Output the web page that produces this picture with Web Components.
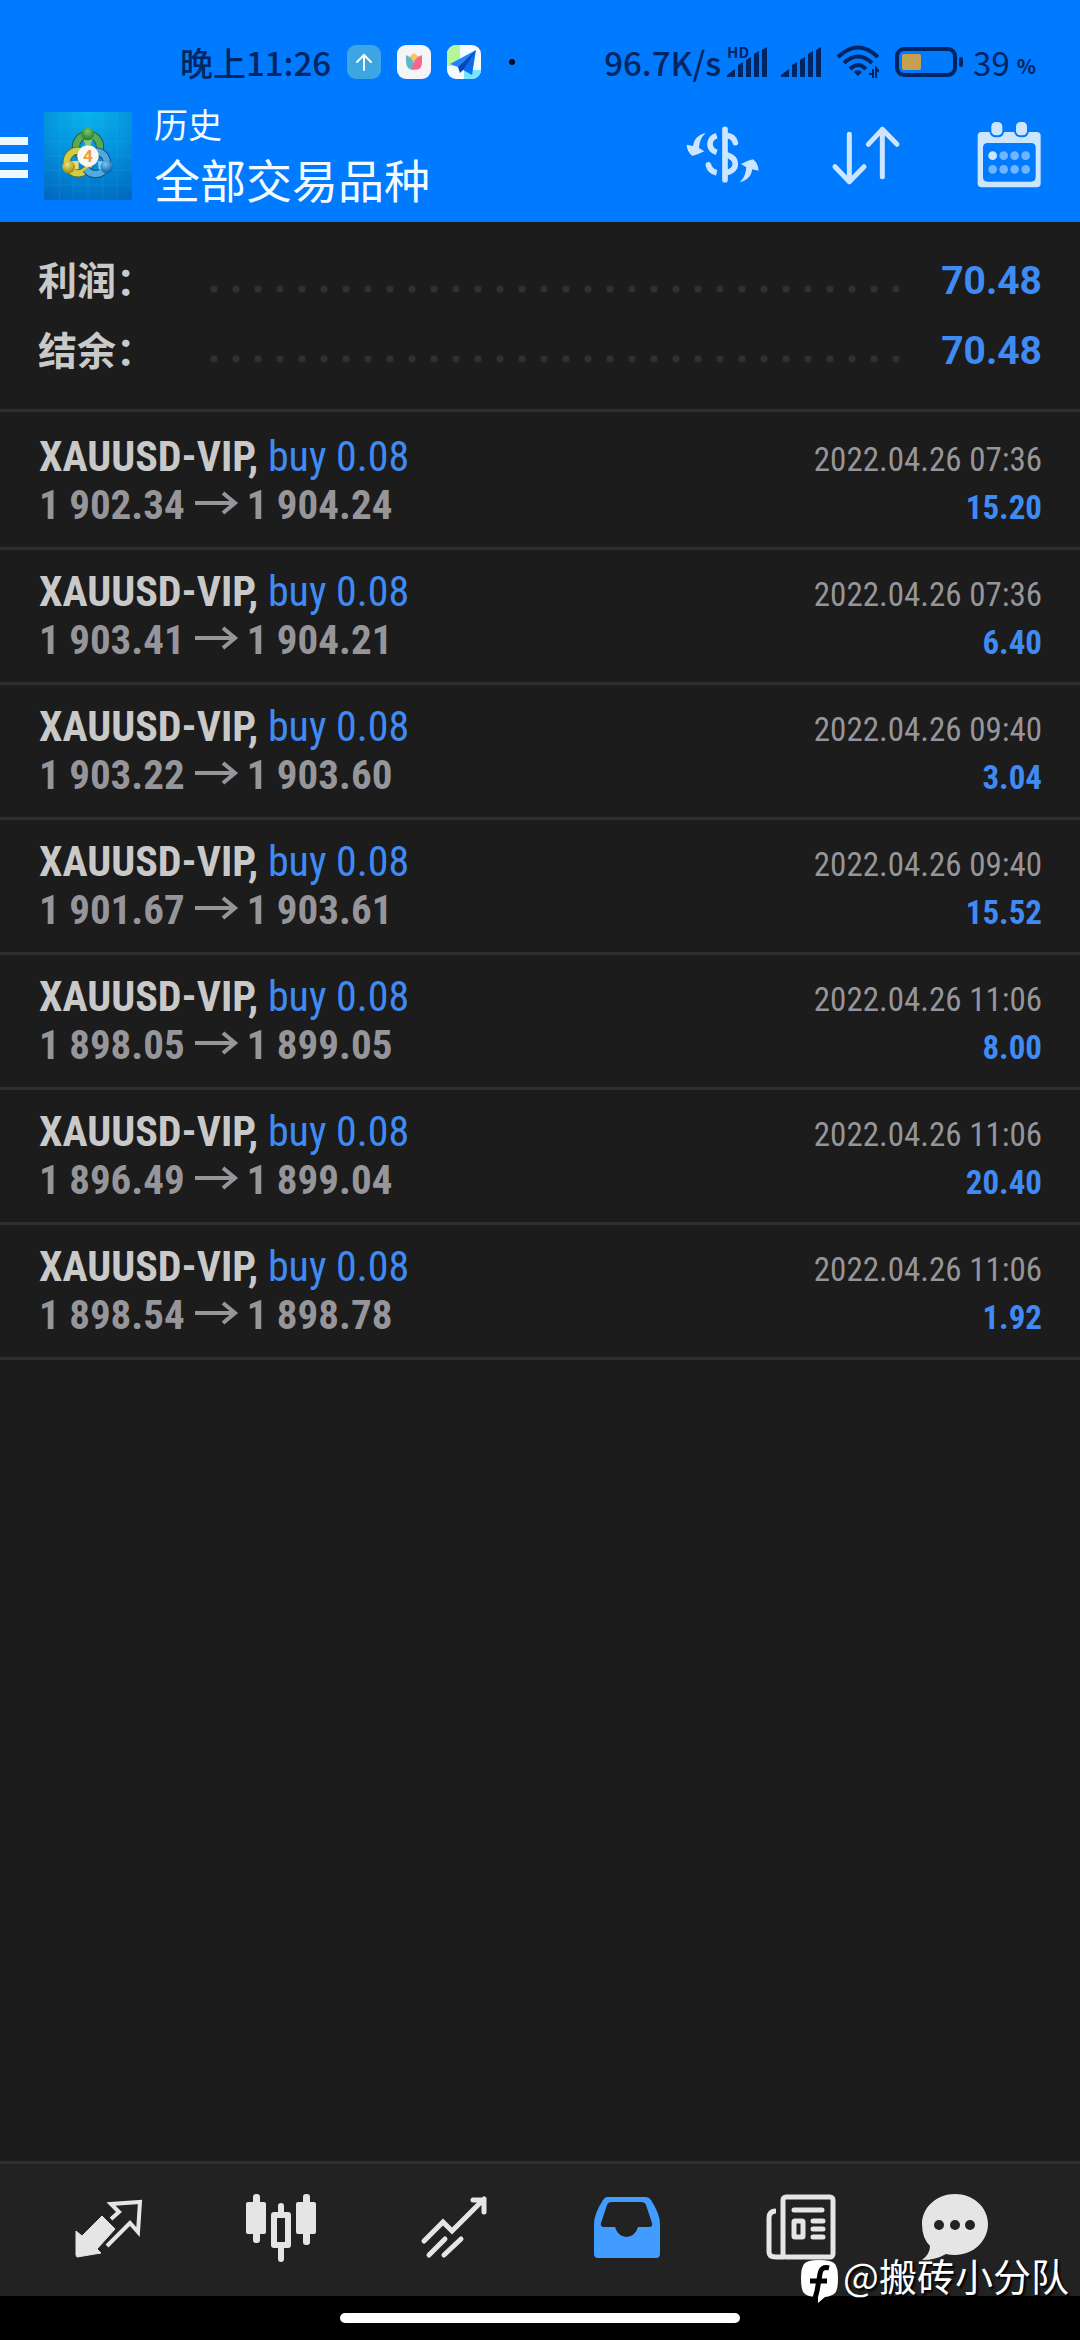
<!DOCTYPE html>
<html lang="zh-CN">
<head>
  <meta charset="utf-8">
  <meta name="viewport" content="width=device-width, initial-scale=1">
  <title>历史</title>
  <style>
    :root {
      --brand-blue: #007aff;
      --status-ink: #002560;
      --toolbar-icon: #cce6ff;
      --page: #1c1c1c;
      --tab-bar: #222222;
      --line: #2f2f30;
      --text: #c9c9c9;
      --muted: #96969a;
      --link: #3f8bf3;
    }

    body {
      margin: 0;
      background-color: var(--page);
      font-family: Roboto, "Noto Sans CJK SC", sans-serif;
    }
  </style>
</head>
<body>
  <history-app>
    <status-bar slot="header" time="晚上11:26" speed="96.7K/s" battery="39"></status-bar>
    <app-bar slot="header" heading="历史" subheading="全部交易品种"></app-bar>
    <account-summary>
      <summary-row label="利润：">70.48</summary-row>
      <summary-row label="结余：">70.48</summary-row>
    </account-summary>
    <deal-row symbol="XAUUSD-VIP," side="buy 0.08" open="1 902.34" close="1 904.24" time="2022.04.26 07:36" profit="15.20"></deal-row>
    <deal-row symbol="XAUUSD-VIP," side="buy 0.08" open="1 903.41" close="1 904.21" time="2022.04.26 07:36" profit="6.40"></deal-row>
    <deal-row symbol="XAUUSD-VIP," side="buy 0.08" open="1 903.22" close="1 903.60" time="2022.04.26 09:40" profit="3.04"></deal-row>
    <deal-row symbol="XAUUSD-VIP," side="buy 0.08" open="1 901.67" close="1 903.61" time="2022.04.26 09:40" profit="15.52"></deal-row>
    <deal-row symbol="XAUUSD-VIP," side="buy 0.08" open="1 898.05" close="1 899.05" time="2022.04.26 11:06" profit="8.00"></deal-row>
    <deal-row symbol="XAUUSD-VIP," side="buy 0.08" open="1 896.49" close="1 899.04" time="2022.04.26 11:06" profit="20.40"></deal-row>
    <deal-row symbol="XAUUSD-VIP," side="buy 0.08" open="1 898.54" close="1 898.78" time="2022.04.26 11:06" profit="1.92"></deal-row>
    <tab-bar slot="footer"></tab-bar>
    <home-indicator slot="footer"></home-indicator>
    <author-mark slot="overlay">@搬砖小分队</author-mark>
  </history-app>

  <script>
    // Clones the markup into an open shadow root and returns it
    function render(element, html) {
      const template = document.createElement("template");
      template.innerHTML = html;
      const shadowRoot = element.attachShadow({ mode: "open" });
      shadowRoot.appendChild(template.content.cloneNode(true));
      return shadowRoot;
    }

    // Copies attributes into the elements of the same class
    function fill(element, names) {
      names.forEach(name => {
        element.shadowRoot.querySelector("." + name).textContent = element.getAttribute(name);
      });
    }

    class HistoryApp extends HTMLElement {
      connectedCallback() {
        render(this, `
          <style>
            :host {
              display: flex;
              flex-direction: column;
              min-height: 100vh;
              position: relative;
              background-color: var(--page);
            }
            header { background-color: var(--brand-blue); }
            main { flex: 1; }
          </style>
          <header><slot name="header"></slot></header>
          <main><slot></slot></main>
          <footer><slot name="footer"></slot></footer>
          <slot name="overlay"></slot>
        `);
      }
    }

    class StatusBar extends HTMLElement {
      connectedCallback() {
        render(this, `
          <style>
            :host {
              display: flex;
              align-items: center;
              height: 56px;
              padding: 34px 44px 0 180px;
              color: var(--status-ink);
              font-family: "Noto Sans CJK SC", sans-serif;
              font-size: 33px;
              line-height: 56px;
              white-space: nowrap;
            }
            svg { display: block; flex: none; }
            .time { font-weight: 500; }
            .apps { display: flex; align-items: center; gap: 16px; margin-left: 16px; }
            .dot { width: 6px; height: 6px; margin-left: 28px; border-radius: 50%; background-color: #000a1a; }
            .system { display: flex; align-items: center; margin-left: auto; }
            .speed { font-weight: 500; margin-right: 6px; }
            .signal { position: relative; margin-right: 14px; }
            .hd {
              position: absolute;
              left: 0;
              top: -1px;
              font-size: 15px;
              font-weight: 700;
              line-height: 12px;
            }
            .wifi { margin: 0 16px 0 2px; }
            .battery { margin-left: 10px; }
            .percent { margin: 8px 0 0 7px; font-size: 20px; font-weight: 700; }
          </style>
          <span class="time"></span>
          <div class="apps">
            <svg width="34" height="34" viewBox="0 0 34 34">
              <rect width="34" height="34" rx="9" fill="#3da5e2"/>
              <path d="M17 25V10M10 17l7-7 7 7" fill="none" stroke="#fff" stroke-width="2" stroke-linecap="round"/>
            </svg>
            <svg width="34" height="34" viewBox="0 0 34 34">
              <rect width="34" height="34" rx="9" fill="#f5f5f7"/>
              <path d="M12 12l5-4 5 4-5 6z" fill="#f3c46c"/>
              <path d="M9 10q8 3 8 12v3q-8 0-8-9z" fill="#5fb6c6"/>
              <path d="M25 10q-9 3-10 14 10 3 10-7z" fill="#f8668e"/>
            </svg>
            <svg width="34" height="34" viewBox="0 0 34 34">
              <clipPath id="tile"><rect width="34" height="34" rx="9"/></clipPath>
              <g clip-path="url(#tile)">
                <rect width="34" height="34" fill="#f4fbff"/>
                <rect width="13" height="21" fill="#b6f69a"/>
                <rect x="17" y="25" width="17" height="9" fill="#78e4fc"/>
                <path d="M29 5L3 19l8 3z" fill="#1f83ff"/>
                <path d="M29 5L11 22l14 8z" fill="#0a6cf0"/>
                <path d="M29 5L11 22l2 6 4-4z" fill="#0447b8"/>
              </g>
            </svg>
          </div>
          <div class="dot"></div>
          <div class="system">
            <span class="speed"></span>
            <div class="signal">
              <span class="hd">HD</span>
              <svg width="40" height="30" viewBox="0 0 40 30" fill="currentColor"><path d="M0 30v-2l8-6v8zM11 18l5-3v15h-5zM19 13l5-3v20h-5zM27 7l5-3v26h-5zM35 3l5-3v30h-5z"/></svg>
            </div>
            <div class="signal">
              <svg width="40" height="30" viewBox="0 0 40 30" fill="currentColor"><path d="M0 30v-2l8-6v8zM11 18l5-3v15h-5zM19 13l5-3v20h-5zM27 7l5-3v26h-5zM35 3l5-3v30h-5z"/></svg>
            </div>
            <svg class="wifi" width="42" height="34" viewBox="0 0 42 34" fill="none" stroke="currentColor" stroke-width="4">
              <path d="M1 12Q21-7 41 12M7 18Q21 5 35 18M13 24Q21 16 29 24"/>
              <path d="M21 31l-4-4q4-4 8 0z" fill="currentColor" stroke="none"/>
              <path d="M32 29h4v-5M36 24v9M39 33v-10l3 4" stroke-width="2"/>
            </svg>
            <svg width="68" height="30" viewBox="0 0 68 30">
              <rect x="2" y="2" width="58" height="26" rx="7" fill="none" stroke="currentColor" stroke-width="4"/>
              <rect x="7" y="7" width="19" height="16" rx="2" fill="#c6a052"/>
              <rect x="64" y="10" width="4" height="10" rx="2" fill="currentColor"/>
            </svg>
            <span class="battery"></span>
            <span class="percent">%</span>
          </div>
        `);
        fill(this, ["time", "speed", "battery"]);
      }
    }

    class AppBar extends HTMLElement {
      connectedCallback() {
        render(this, `
          <style>
            :host {
              display: flex;
              align-items: center;
              height: 132px;
              color: #f2faff;
              font-family: "Noto Sans CJK SC", sans-serif;
            }
            svg { display: block; }
            button { border: 0; padding: 0; background: none; color: inherit; cursor: pointer; }
            .menu { width: 44px; }
            .titles { flex: 1; margin-left: 22px; }
            h1, p { margin: 0; font-weight: 400; white-space: nowrap; }
            h1 { font-size: 34px; line-height: 44px; }
            p { font-size: 46px; line-height: 64px; }
            .actions { display: flex; color: var(--toolbar-icon); }
            .actions button { display: grid; place-items: center; width: 143px; height: 132px; }
          </style>
          <button class="menu" aria-label="menu">
            <svg width="28" height="44" viewBox="0 0 28 44" fill="#eef8ff"><path d="M0 3h28v8H0zM0 20h28v8H0zM0 36h28v8H0z"/></svg>
          </button>
          <svg width="88" height="88" viewBox="24 24 264 264">
            <defs>
              <radialGradient id="sky" cx=".5" cy="0" r="1.1"><stop offset="0" stop-color="#08b4ea"/><stop offset=".5" stop-color="#0490dc"/><stop offset="1" stop-color="#0068c0"/></radialGradient>
              <radialGradient id="green" cx=".5" cy=".3" r=".7"><stop offset="0" stop-color="#7cc96a"/><stop offset="1" stop-color="#1c7a25"/></radialGradient>
              <radialGradient id="gold" cx=".4" cy=".3" r=".7"><stop offset="0" stop-color="#ece27a"/><stop offset="1" stop-color="#9c8c0c"/></radialGradient>
              <radialGradient id="azure" cx=".4" cy=".3" r=".7"><stop offset="0" stop-color="#7cc6f0"/><stop offset="1" stop-color="#0a62a8"/></radialGradient>
            </defs>
            <rect x="24" y="24" width="264" height="264" fill="url(#sky)"/>
            <path d="M71 24v264M112 24v264M156 24v264M200 24v264M243 24v264M24 69h264M24 112h264M24 156h264M24 198h264M24 243h264" stroke="#4db4f0" stroke-opacity=".25" stroke-width="2"/>
            <g fill="none">
              <circle cx="156" cy="128" r="36" stroke="#1d5a4a" stroke-width="25"/>
              <circle cx="156" cy="128" r="36" stroke="#58ab52" stroke-width="19"/>
              <circle cx="126" cy="174" r="34" stroke="#5a6420" stroke-width="24"/>
              <circle cx="126" cy="174" r="34" stroke="#d2cb48" stroke-width="19"/>
              <path d="M180 142a34 34 0 1 1-29 54" stroke="#0a4f86" stroke-width="25"/>
              <path d="M180 142a34 34 0 1 1-29 54" stroke="#52a9de" stroke-width="19"/>
            </g>
            <path d="M142 100h28l-6 24h-16z" fill="#8cc878"/>
            <path d="M106 172l22-2v26h-22z" fill="#e8dd70"/>
            <path d="M186 172l20 0v26l-18-2z" fill="#8ccbf0"/>
            <circle cx="155" cy="90" r="19" fill="url(#green)"/>
            <circle cx="98" cy="189" r="19" fill="url(#gold)"/>
            <circle cx="212" cy="188" r="19" fill="url(#azure)"/>
            <circle cx="156" cy="156" r="32" fill="#f8f8f6"/>
            <text x="156" y="174" text-anchor="middle" font-family="Roboto, sans-serif" font-size="52" font-weight="700" fill="#f29a3c">4</text>
          </svg>
          <div class="titles">
            <h1 class="heading"></h1>
            <p class="subheading"></p>
          </div>
          <div class="actions">
            <button aria-label="symbols">
              <svg width="90" height="70" viewBox="-7 3 270 210" fill="none" stroke="currentColor" stroke-width="17">
                <path d="M76 39C54 44 42 56 38 78L19 74Q20 95 36 108 52 104 72 94L56 84C58 66 62 52 76 39Z" fill="currentColor" stroke="none"/>
                <path d="M178 187C200 182 212 170 216 148L235 152Q234 131 218 118 202 122 182 132L198 142C196 160 192 174 178 187Z" fill="currentColor" stroke="none"/>
                <path d="M109 47Q89 54 89 72T109 97"/>
                <path d="M84 134Q88 154 109 158"/>
                <circle cx="84" cy="134" r="8" fill="currentColor" stroke="none"/>
                <path d="M134 28V179" stroke-linecap="round"/>
                <path d="M138 46Q160 48 165 68" stroke-linecap="round"/>
                <path d="M138 104Q165 112 165 132T138 158"/>
              </svg>
            </button>
            <button aria-label="sort">
              <svg width="72" height="66" viewBox="477 69 216 198" fill="none" stroke="currentColor" stroke-width="15" stroke-linecap="round" stroke-linejoin="round">
                <path d="M535 103V245M492 200l43 45 44-45M634 230V88M592 133l42-45 44 45"/>
              </svg>
            </button>
            <button aria-label="period">
              <svg width="72" height="66" viewBox="907 69 216 198" fill="currentColor" overflow="visible">
                <path fill-rule="evenodd" d="M933 96H1098q12 0 12 12V250q0 12-12 12H933q-12 0-12-12V108q0-12 12-12zM951 129q-14 0-14 14V231q0 14 14 14H1081q14 0 14-14V143q0-14-14-14z"/>
                <g stroke="#007aff" stroke-width="6"><rect x="959" y="63" width="39" height="46" rx="16"/><rect x="1033" y="63" width="39" height="46" rx="16"/></g>
                <circle cx="966" cy="167" r="13"/>
                <g opacity=".55"><circle cx="999" cy="167" r="13"/><circle cx="1032" cy="167" r="13"/><circle cx="1065" cy="167" r="13"/><circle cx="966" cy="208" r="13"/><circle cx="999" cy="208" r="13"/><circle cx="1032" cy="208" r="13"/><circle cx="1065" cy="208" r="13"/></g>
              </svg>
            </button>
          </div>
        `);
        fill(this, ["heading", "subheading"]);
      }
    }

    class AccountSummary extends HTMLElement {
      connectedCallback() {
        render(this, `
          <style>
            :host {
              display: block;
              padding: 23px 38px 24px 38px;
              border-bottom: 3px solid var(--line);
              margin-bottom: 3px;
            }
          </style>
          <slot></slot>
        `);
      }
    }

    class SummaryRow extends HTMLElement {
      connectedCallback() {
        render(this, `
          <style>
            :host {
              display: grid;
              grid-template-columns: 165px 1fr auto;
              height: 70px;
              font-size: 39px;
            }
            .label {
              color: var(--text);
              font-family: "Noto Sans CJK SC", sans-serif;
              font-weight: 700;
              line-height: 66px;
            }
            .leader {
              align-self: center;
              height: 22px;
              margin: 16px 36px 0 0;
              background: radial-gradient(circle, #303031 3px, transparent 4px) 0 0 / 22px 22px repeat-x;
            }
            .value { color: var(--link); font-weight: 700; line-height: 72px; }
          </style>
          <span class="label"></span>
          <span class="leader"></span>
          <span class="value"><slot></slot></span>
        `);
        fill(this, ["label"]);
      }
    }

    class DealRow extends HTMLElement {
      connectedCallback() {
        render(this, `
          <style>
            :host {
              display: block;
              padding: 18px 38px 18px 39px;
              border-bottom: 3px solid var(--line);
              font-family: "Roboto Condensed", Roboto, sans-serif;
              font-size: 42px;
              line-height: 48px;
              white-space: nowrap;
            }
            .line { display: flex; justify-content: space-between; align-items: baseline; height: 48px; }
            .symbol { color: var(--text); font-weight: 700; }
            .side { color: var(--link); }
            .prices { color: var(--muted); font-size: 41px; font-weight: 700; }
            svg { margin: 0 8px 0 10px; vertical-align: 4px; }
            .time { color: var(--muted); font-size: 33px; }
            .profit { color: var(--link); font-size: 33px; font-weight: 700; }
          </style>
          <div class="line">
            <span><span class="symbol"></span> <span class="side"></span></span>
            <span class="time"></span>
          </div>
          <div class="line">
            <span class="prices"><span class="open"></span><svg width="44" height="24" viewBox="0 0 44 24" fill="none" stroke="currentColor" stroke-width="4"><path d="M0 12h40M28 2l12 10-12 10"/></svg><span class="close"></span></span>
            <span class="profit"></span>
          </div>
        `);
        fill(this, ["symbol", "side", "time", "open", "close", "profit"]);
      }
    }

    class TabBar extends HTMLElement {
      connectedCallback() {
        render(this, `
          <style>
            :host {
              display: block;
              border-top: 3px solid var(--line);
              background-color: var(--tab-bar);
              color: #e5e5e5;
            }
            nav { display: grid; grid-template-columns: repeat(5, 16fr) 12fr; padding: 0 6% 0 2%; }
            button {
              display: grid;
              place-items: center;
              height: 132px;
              border: 0;
              padding: 0;
              background: none;
              color: inherit;
              cursor: pointer;
            }
            button[aria-current] { color: #429bff; }
          </style>
          <nav>
            <button aria-label="quotes">
              <svg width="80" height="80" viewBox="68 40 80 80">
                <path d="M76 81l6 5 20-20 13 13-18 20 4 4-24 4-1-2z" fill="currentColor" stroke="currentColor" stroke-linejoin="round"/>
                <path d="M111 69l8-7-8-8 29-2-2 30-8-9-23 23" fill="none" stroke="currentColor" stroke-width="4"/>
              </svg>
            </button>
            <button aria-label="charts">
              <svg width="80" height="80" viewBox="241 40 80 80" fill="currentColor">
                <rect x="253" y="44" width="7" height="49" rx="3"/><rect x="246" y="52" width="20" height="32" rx="2"/>
                <rect x="303" y="44" width="7" height="51" rx="3"/><rect x="296" y="52" width="20" height="32" rx="2"/>
                <path d="M278 62v-6q0-3 3-3t3 3v6zM278 98v11q0 3 3 3t3-3V98z"/>
                <rect x="274" y="65" width="14" height="30" fill="none" stroke="currentColor" stroke-width="6" stroke-linejoin="round"/>
              </svg>
            </button>
            <button aria-label="trade">
              <svg width="80" height="80" viewBox="414 40 80 80" fill="none" stroke="currentColor" stroke-width="5" stroke-linecap="round">
                <path d="M424 91l19-19 9 9 32-32M473 50h11v12M429 105l16-16M444 105l17-16"/>
              </svg>
            </button>
            <button aria-label="history" aria-current="page">
              <svg width="80" height="80" viewBox="587 40 80 80" fill="currentColor">
                <path fill-rule="evenodd" d="M608 47h39q3 0 5 3 9 14 9 24v30q0 4-4 4h-58q-4 0-4-4V74q0-10 9-24 2-3 4-3zM613 52q-4 0-5 3l-6 18q-1 4 3 4h11a12 14 0 0 0 23 0h11q4 0 3-4l-6-18q-1-3-5-3z"/>
              </svg>
            </button>
            <button aria-label="news">
              <svg width="80" height="80" viewBox="759 40 80 80" fill="none" stroke="currentColor" stroke-width="5">
                <rect x="783" y="47" width="50" height="60" rx="3"/>
                <path d="M776 61q-7 0-7 7v34q0 5 7 5h8"/>
                <rect x="794" y="71" width="9" height="16" rx="1"/>
                <path d="M794 60h28M813 71h10M813 79h10M813 87h10" stroke-linecap="round"/>
              </svg>
            </button>
            <button aria-label="messages">
              <svg width="80" height="80" viewBox="908 40 80 80">
                <path d="M953 44c18 0 33 13 33 30s-15 31-33 31q-5 0-9-1-10 6-24 6 8-6 8-14-8-8-8-22c0-17 15-30 33-30z" fill="currentColor"/>
                <g fill="#222"><circle cx="937" cy="75" r="5"/><circle cx="953" cy="75" r="5"/><circle cx="968" cy="75" r="5"/></g>
              </svg>
            </button>
          </nav>
        `);
      }
    }

    class HomeIndicator extends HTMLElement {
      connectedCallback() {
        render(this, `
          <style>
            :host { display: block; height: 27px; padding-top: 17px; background-color: #000; }
            div { width: 37%; height: 10px; margin: 0 auto; border-radius: 5px; background-color: #fff; }
          </style>
          <div></div>
        `);
      }
    }

    // Floats over the tab bar and the home indicator
    class AuthorMark extends HTMLElement {
      connectedCallback() {
        render(this, `
          <style>
            :host {
              position: absolute;
              right: 11px;
              bottom: 36px;
              display: flex;
              align-items: flex-end;
              gap: 5px;
              color: #fff;
              font-family: "Noto Sans CJK SC", sans-serif;
              font-size: 38px;
              line-height: 58px;
              text-shadow: 2px 2px 2px #000;
              white-space: nowrap;
            }
          </style>
          <svg width="37" height="44" viewBox="0 0 37 44">
            <path d="M18 0Q31 0 34 4 37 8 37 18 37 30 34 33 31 36 24 37L17 43V37Q6 37 3 33 0 30 0 18 0 8 3 4 6 0 18 0Z" fill="#fff"/>
            <path d="M28 8q-8-2-9 6l-3 17q-1 5-3 9M9 21h17" fill="none" stroke="#000" stroke-width="5"/>
          </svg>
          <span><slot></slot></span>
        `);
      }
    }

    customElements.define("history-app", HistoryApp);
    customElements.define("status-bar", StatusBar);
    customElements.define("app-bar", AppBar);
    customElements.define("account-summary", AccountSummary);
    customElements.define("summary-row", SummaryRow);
    customElements.define("deal-row", DealRow);
    customElements.define("tab-bar", TabBar);
    customElements.define("home-indicator", HomeIndicator);
    customElements.define("author-mark", AuthorMark);
  </script>
</body>
</html>
